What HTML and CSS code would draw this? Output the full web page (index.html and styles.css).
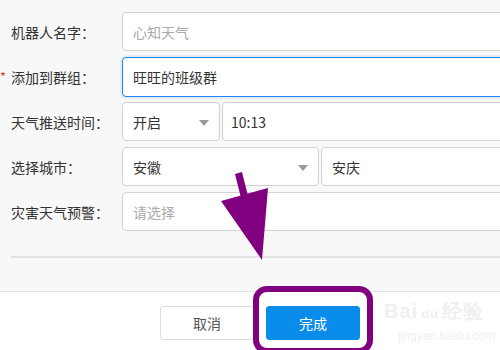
FILE: index.html
```html
<!DOCTYPE html>
<html lang="zh">
<head>
<meta charset="utf-8">
<link rel="stylesheet" href="styles.css">
</head>
<body>
<div class="page">
  <div class="form">
    <div class="row">
      <label class="label">机器人名字：</label>
      <div class="field wide placeholder">心知天气</div>
    </div>
    <div class="row">
      <label class="label"><span class="req">*</span>添加到群组：</label>
      <div class="field wide focus">旺旺的班级群</div>
    </div>
    <div class="row">
      <label class="label">天气推送时间：</label>
      <div class="field select small">开启<span class="caret"></span></div>
      <div class="field wide time">10:13</div>
    </div>
    <div class="row">
      <label class="label">选择城市：</label>
      <div class="field select medium">安徽<span class="caret"></span></div>
      <div class="field wide">安庆</div>
    </div>
    <div class="row">
      <label class="label">灾害天气预警：</label>
      <div class="field wide placeholder">请选择</div>
    </div>
    <div class="divider"></div>
  </div>
  <div class="footer">
    <button class="btn cancel">取消</button>
    <button class="btn primary">完成</button>
  </div>
</div>

<div class="watermark">
  <div class="wm-top">Bai<span class="wm-paw">du</span>经验</div>
  <div class="wm-bottom">jingyan.baidu.com</div>
</div>

<svg class="overlay" width="500" height="350" viewBox="0 0 500 350">
  <polygon points="235,174 242,172 248,196 241,198" fill="#800080"/>
  <polygon points="221,201 268,188 262,260" fill="#800080"/>
  <rect x="256" y="289" width="114" height="62" rx="11" ry="11" fill="none" stroke="#800080" stroke-width="6"/>
</svg>
</body>
</html>
```
FILE: styles.css
```css
* { box-sizing: border-box; margin: 0; padding: 0; }
html, body { width: 500px; height: 350px; overflow: hidden; }
body {
  background: #fff;
  font-family: "Noto Sans CJK SC", "Noto Sans", sans-serif;
  font-size: 14px;
  color: #333;
  position: relative;
}
.page { display: flex; flex-direction: column; height: 350px; }
.form {
  background: #f8f8f8;
  height: 292px;
  padding-top: 12px;
  display: flex;
  flex-direction: column;
  gap: 6px;
  border-bottom: 1px solid #e2e2e2;
}
.row { display: flex; align-items: center; height: 39px; gap: 2px; }
.label {
  width: 120px;
  flex: none;
  padding-left: 11px;
  position: relative;
  color: #333;
  white-space: nowrap;
}
.req { position: absolute; left: 0; top: 0; color: #e4393c; font-size: 13px; }
.field {
  height: 39px;
  flex: none;
  background: #fff;
  border: 1px solid #d2d2d2;
  border-radius: 4px;
  padding: 0 10px;
  display: flex;
  align-items: center;
  color: #333;
  position: relative;
}
.wide { width: 420px; }
.placeholder { color: #aaa; }
.focus { border-color: #1a85f0; box-shadow: 0 0 0 2px #e4eef9; height: 40px; }
.small { width: 98px; }
.medium { width: 197px; }
.time { padding-left: 8px; }
.caret {
  position: absolute;
  right: 10px;
  top: 17px;
  width: 0; height: 0;
  border-left: 5px solid transparent;
  border-right: 5px solid transparent;
  border-top: 6px solid #999;
}
.divider { margin: 19px 0 0 11px; height: 2px; background: #e2e2e2; }
.footer {
  flex: 1;
  background: #fff;
  display: flex;
  align-items: flex-start;
  padding: 14px 0 0 160px;
  gap: 12px;
}
.btn {
  width: 94px;
  height: 34px;
  border-radius: 3px;
  font-family: inherit;
  font-size: 14px;
}
.cancel { background: #fff; border: 1px solid #dcdcdc; color: #555; }
.primary { background: #0a8ceb; border: 1px solid #0a8ceb; color: #fff; }
.overlay { position: absolute; left: 0; top: 0; pointer-events: none; }
.watermark {
  position: absolute;
  left: 384px;
  top: 300px;
  color: #f0f0f0;
  font-family: "Liberation Sans", sans-serif;
}
.wm-top { font-size: 20px; font-weight: bold; letter-spacing: 1px; line-height: 22px; }
.wm-paw { font-size: 13px; margin: 0 3px; }
.wm-bottom { font-size: 12px; line-height: 16px; margin-top: 3px; padding-left: 14px; }
```
